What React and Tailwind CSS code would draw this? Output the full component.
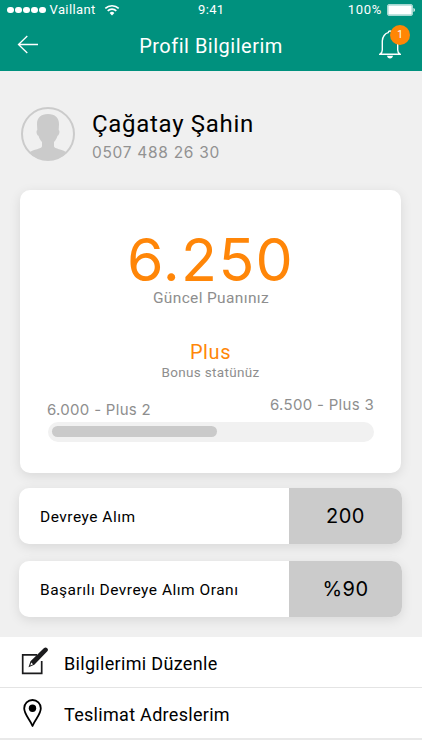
import React from "react";

const stats = [
  { label: "Devreye Alım", value: "200" },
  { label: "Başarılı Devreye Alım Oranı", value: "%90" },
];

function StatusBar() {
  return (
    <div className="relative flex h-5 items-center justify-between pl-[7px] pr-[7px] text-[13px] leading-5 tracking-[0.35px]">
      <div className="flex items-center">
        <div className="flex gap-[1.5px]">
          {[0, 1, 2, 3, 4].map((i) => (
            <span key={i} className="h-[6.5px] w-[6.5px] rounded-full bg-white"></span>
          ))}
        </div>
        <span className="ml-[4px] tracking-[0.4px]">Vaillant</span>
        <svg className="ml-[8px]" width="16" height="12" viewBox="0 0 16 12" fill="none">
          <path d="M1.3 4.4a9.6 9.6 0 0 1 13.4 0" stroke="#fff" strokeWidth="1.6" />
          <path d="M3.7 6.9a6.1 6.1 0 0 1 8.6 0" stroke="#fff" strokeWidth="1.6" />
          <path d="M8 11.4 5.6 9a3.4 3.4 0 0 1 4.8 0Z" fill="#fff" />
        </svg>
      </div>
      <span className="absolute left-[198px]">9:41</span>
      <div className="flex items-center">
        <span className="mr-px tracking-[0.7px]">100%</span>
        <svg className="ml-[4px]" width="28" height="12" viewBox="0 0 28 12" fill="none">
          <rect x="0.5" y="0.5" width="25" height="11" rx="1.5" stroke="#fff" strokeOpacity="0.65" />
          <rect x="1.2" y="1.2" width="23.6" height="9.6" rx="0.5" fill="#fff" />
          <path d="M26.5 4v4c.9-.3 1.3-1.1 1.3-2s-.4-1.7-1.3-2Z" fill="#fff" />
        </svg>
      </div>
    </div>
  );
}

function Header() {
  return (
    <header className="h-[71px] bg-[#00917e] text-white">
      <StatusBar />
      <div className="relative flex h-[51px] items-center justify-center">
        <svg className="absolute left-[17px] top-[14px]" width="22" height="20" viewBox="0 0 22 20" fill="none" stroke="#fff" strokeWidth="1.3">
          <path d="M21 10.5H1.5M10.3 2 1.5 10.5l8.8 8.5" />
        </svg>
        <h1 className="text-[20px] leading-6 tracking-[0.5px]">Profil Bilgilerim</h1>
        <svg className="absolute left-[379px] top-[9px]" width="22" height="31" viewBox="0 0 22 31" fill="none">
          <path d="M1 25.2h20c-1.500-1-2.300-2.300-2.300-4.200V11c0-4-2.900-6.800-5.900-7.400-.2-1.100-.9-1.600-1.800-1.600s-1.600.5-1.800 1.600C6.200 4.200 3.300 8 3.300 12v9c0 1.900-.8 3.200-2.300 4.200Z" stroke="#fff" strokeWidth="1.4" />
          <path d="M8 26.8h6c-.2 1.600-1.400 2.700-3 2.700s-2.800-1.100-3-2.700Z" fill="#fff" />
        </svg>
        <span className="absolute left-[390px] top-[5px] flex h-5 w-5 items-center justify-center rounded-full bg-[#ff8604] text-[10px] leading-none">
          1
        </span>
      </div>
    </header>
  );
}

function Avatar() {
  return (
    <svg width="54" height="54" viewBox="0 0 54 54" fill="none">
      <circle cx="27" cy="27" r="26" stroke="#cbcbcb" strokeWidth="2" />
      <path
        d="M27 7c-7 0-11.200 3.800-11 10.500l.3 5.500c-1.500.7-.6 5.200 1.200 5.800.8 2.700 1.900 4.700 3.500 6.200v4.200c-.3 2.800-8.500 3-13 6.300A26 26 0 0 0 27 53a26 26 0 0 0 19-7.500c-4.500-3.300-12.700-3.500-13-6.300V35c1.600-1.500 2.700-3.500 3.500-6.200 1.800-.6 2.700-5.100 1.200-5.800l.3-5.500C38.200 10.800 34 7 27 7Z"
        fill="#cbcbcb"
      />
    </svg>
  );
}

function EditIcon() {
  return (
    <svg width="28" height="28" viewBox="0 0 28 28" fill="none">
      <path d="M16 7.800H1.700v18.500h19V14" stroke="#1b1b1d" strokeWidth="1.7" />
      <path d="m7.500 20.300 2-6.100L22.800 1.300c1.300-1.200 2.400-1.100 3.400 0s1.100 2.100-.1 3.300L13.300 17.800Z" fill="#1b1b1d" />
      <path d="m9.300 18.500.9-2.900 1.900 1.600Z" fill="#fff" />
    </svg>
  );
}

function PinIcon() {
  return (
    <svg width="20" height="28" viewBox="0 0 20 28" fill="none">
      <path d="M10.5 27C8 20 2.200 15.800 2.200 9.300a8.300 8.300 0 0 1 16.600 0c0 6.500-5.800 10.700-8.300 17.700Z" stroke="#000" strokeWidth="1.8" strokeLinejoin="round" />
      <circle cx="10.5" cy="9.2" r="3.7" fill="#000" />
    </svg>
  );
}

export default function App() {
  return (
    <div className="flex h-[750px] w-[422px] flex-col overflow-hidden bg-[#f0f0f0] font-['Roboto','Liberation_Sans',sans-serif] text-black">
      <Header />

      <section className="flex h-[118.5px] pl-[21px] pt-[36px]">
        <Avatar />
        <div className="ml-[17px] pt-[2px]">
          <h2 className="text-[24px] leading-[30px] tracking-[0.7px]">Çağatay Şahin</h2>
          <p className="mt-[4px] font-['Inter',sans-serif] text-[15.5px] leading-5 tracking-[0.7px] text-[#929292]">0507 488 26 30</p>
        </div>
      </section>

      <section className="ml-5 mr-[21px] flex h-[283px] shrink-0 flex-col items-center rounded-[10px] bg-white pt-[48px] shadow-[0_3px_12px_rgba(0,0,0,0.1)]">
        <div className="font-['Inter',sans-serif] text-[59px] leading-[44px] tracking-[1.3px] text-[#ff8608]">6.250</div>
        <div className="mt-[6px] pl-px text-[15.5px] leading-5 tracking-[0.35px] text-[#8e8e8e]">Güncel Puanınız</div>
        <div className="mt-[32px] text-[20px] leading-6 tracking-[0.6px] text-[#ff8608]">Plus</div>
        <div className="text-[13.5px] leading-4 tracking-[0.33px] text-[#8e8e8e]">Bonus statünüz</div>
        <div className="mt-[14px] flex w-[327px] justify-between font-['Inter',sans-serif] text-[15px] leading-5 tracking-[0.3px] text-[#8e8e8e]">
          <span className="pt-[6px]">6.000 - Plus 2</span>
          <span className="pt-px">6.500 - Plus 3</span>
        </div>
        <div className="ml-px mt-[2px] h-5 w-[326px] rounded-full bg-[#f1f1f1] p-1 pr-0">
          <div className="mt-[0.5px] h-[11px] w-[165px] rounded-full bg-[#cacaca]"></div>
        </div>
      </section>

      <section className="mt-[15px] flex flex-col gap-[17px] pl-[19px] pr-5">
        {stats.map((s) => (
          <div key={s.label} className="flex h-14 overflow-hidden rounded-[10px] bg-white shadow-[0_3px_12px_rgba(0,0,0,0.1)]">
            <div className="flex flex-1 items-center pl-[21px] pt-[4px] text-[15.5px] tracking-[0.5px]">{s.label}</div>
            <div className="flex w-[113px] items-center justify-center bg-[#cbcbcb] font-['Inter',sans-serif] text-[20px] tracking-[0.5px]">{s.value}</div>
          </div>
        ))}
      </section>

      <nav className="mt-auto h-[113px] shrink-0 bg-white text-[18px]">
        <a className="flex h-[51px] items-center border-b border-[#e4e4e4]" href="#">
          <span className="flex w-[64px] pb-[2px] pl-[21px]"><EditIcon /></span>
          <span className="pt-[2px] tracking-[0.32px]">Bilgilerimi Düzenle</span>
        </a>
        <a className="flex h-[52px] items-center border-b-2 border-[#e9e9e9]" href="#">
          <span className="flex w-[64px] pl-[22px]"><PinIcon /></span>
          <span className="pt-[3px] tracking-[0.3px]">Teslimat Adreslerim</span>
        </a>
      </nav>
    </div>
  );
}
